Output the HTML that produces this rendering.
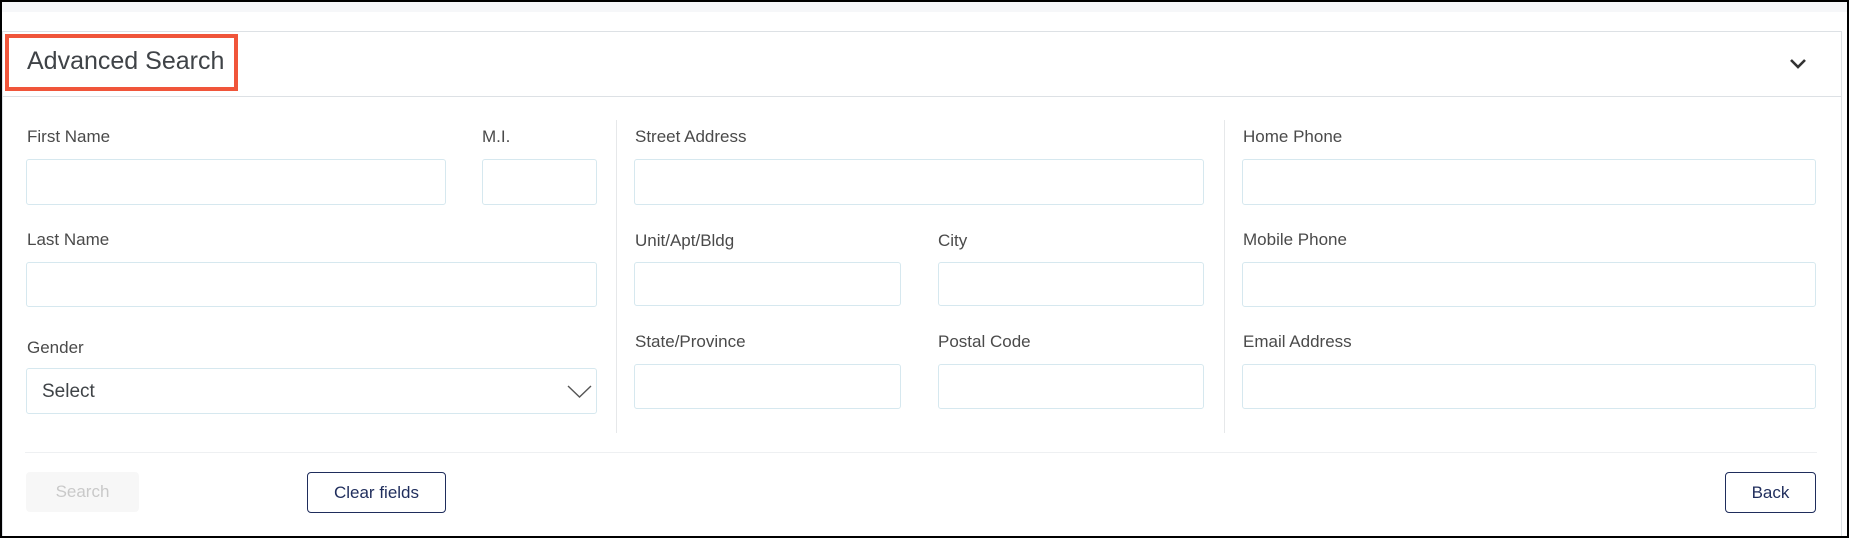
<!DOCTYPE html>
<html><head><meta charset="utf-8"><style>
*{box-sizing:border-box;margin:0;padding:0}
html,body{width:1849px;height:538px;overflow:hidden}
body{position:relative;background:#fff;font-family:"Liberation Sans",Arial,sans-serif}
.frame{position:absolute;left:0;top:0;width:1849px;height:538px;border:2px solid #000;z-index:10;pointer-events:none}
.strip{position:absolute;left:0;top:0;width:1849px;height:12px;background:#f6f7f9}
.card{position:absolute;left:2px;top:31px;width:1840px;height:507px;border:1px solid #dde1e5;border-bottom:none;background:#fff}
.hdr{position:absolute;left:2px;top:96px;width:1840px;height:1px;background:#dde1e5}
.red{position:absolute;left:5px;top:34px;width:233px;height:57px;border:4px solid #f0553a}
.title{position:absolute;left:27px;top:47px;font-size:25px;color:#3f4347;white-space:nowrap}
.lbl{position:absolute;font-size:17px;color:#4a4a4a;white-space:nowrap}
.in{position:absolute;border:1px solid #d6e8ef;border-radius:3px;background:#fff}
.vd{position:absolute;top:120px;width:1px;height:313px;background:#e6e8ea}
.btn{position:absolute;border-radius:4px;font-size:17px;display:flex;align-items:center;justify-content:center}
</style></head><body>
<div class="strip"></div>
<div class="card"></div>
<div class="hdr"></div>
<div class="red"></div>
<div class="title">Advanced Search</div>
<svg style="position:absolute;left:1789px;top:58px" width="18" height="12" viewBox="0 0 18 12"><path d="M2 2 L9 9 L16 2" fill="none" stroke="#333" stroke-width="2.6"/></svg>

<div class="lbl" style="left:27px;top:127px">First Name</div>
<div class="in" style="left:26px;top:159px;width:420px;height:46px"></div>
<div class="lbl" style="left:482px;top:127px">M.I.</div>
<div class="in" style="left:482px;top:159px;width:115px;height:46px"></div>
<div class="lbl" style="left:27px;top:230px">Last Name</div>
<div class="in" style="left:26px;top:262px;width:571px;height:45px"></div>
<div class="lbl" style="left:27px;top:338px">Gender</div>
<div class="in" style="left:26px;top:368px;width:571px;height:46px"></div>
<div class="lbl" style="left:42px;top:381px;font-size:19px;color:#3f4347">Select</div>
<svg style="position:absolute;left:567px;top:384px" width="25" height="15" viewBox="0 0 25 15"><path d="M1 2 L12.5 13 L24 2" fill="none" stroke="#555" stroke-width="1.4"/></svg>

<div class="vd" style="left:616px"></div>
<div class="vd" style="left:1224px"></div>

<div class="lbl" style="left:635px;top:127px">Street Address</div>
<div class="in" style="left:634px;top:159px;width:570px;height:46px"></div>
<div class="lbl" style="left:635px;top:231px">Unit/Apt/Bldg</div>
<div class="in" style="left:634px;top:262px;width:267px;height:44px"></div>
<div class="lbl" style="left:938px;top:231px">City</div>
<div class="in" style="left:938px;top:262px;width:266px;height:44px"></div>
<div class="lbl" style="left:635px;top:332px">State/Province</div>
<div class="in" style="left:634px;top:364px;width:267px;height:45px"></div>
<div class="lbl" style="left:938px;top:332px">Postal Code</div>
<div class="in" style="left:938px;top:364px;width:266px;height:45px"></div>

<div class="lbl" style="left:1243px;top:127px">Home Phone</div>
<div class="in" style="left:1242px;top:159px;width:574px;height:46px"></div>
<div class="lbl" style="left:1243px;top:230px">Mobile Phone</div>
<div class="in" style="left:1242px;top:262px;width:574px;height:45px"></div>
<div class="lbl" style="left:1243px;top:332px">Email Address</div>
<div class="in" style="left:1242px;top:364px;width:574px;height:45px"></div>

<div style="position:absolute;left:25px;top:452px;width:1792px;height:1px;background:#eef0f2"></div>

<div class="btn" style="left:26px;top:472px;width:113px;height:40px;background:#f7f7f7;color:#c9c9c9">Search</div>
<div class="btn" style="left:307px;top:472px;width:139px;height:41px;border:1.5px solid #1f2d5c;color:#1f2d5c">Clear fields</div>
<div class="btn" style="left:1725px;top:472px;width:91px;height:41px;border:1.5px solid #1f2d5c;color:#1f2d5c">Back</div>

<div class="frame"></div>
</body></html>
